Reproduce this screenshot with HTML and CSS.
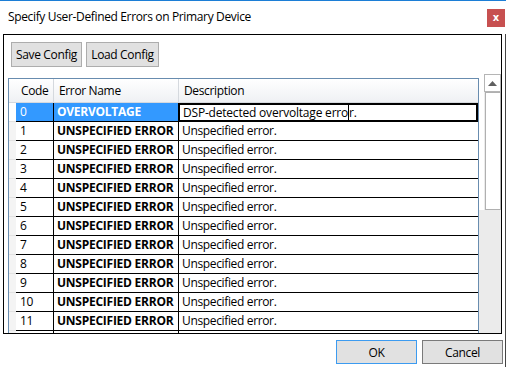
FILE: index.html
```html
<!DOCTYPE html>
<html lang="en">
<head>
    <meta charset="UTF-8">
    <title>Specify User-Defined Errors on Primary Device</title>
    <link rel="stylesheet" href="styles.css">
</head>
<body>
    <div class="window">
        <div class="titlebar">
            <span class="title">Specify User-Defined Errors on Primary Device</span>
            <button class="close-btn">x</button>
        </div>

        <div class="content">
            <div class="panel">
                <div class="toolbar">
                    <button class="btn save">Save Config</button>
                    <button class="btn load">Load Config</button>
                </div>

                <div class="grid-area">
                    <div class="grid">
                        <div class="row header">
                            <div class="rh"></div>
                            <div class="cell code">Code</div>
                            <div class="cell name">Error Name</div>
                            <div class="cell desc">Description</div>
                        </div>

                        <div class="row selected">
                            <div class="rh"></div>
                            <div class="cell code">0</div>
                            <div class="cell name">OVERVOLTAGE</div>
                            <div class="cell desc editing">DSP-detected overvoltage erro<span class="caret"></span>r.</div>
                        </div>
                        <div class="row"><div class="rh"></div><div class="cell code">1</div><div class="cell name">UNSPECIFIED ERROR</div><div class="cell desc">Unspecified error.</div></div>
                        <div class="row"><div class="rh"></div><div class="cell code">2</div><div class="cell name">UNSPECIFIED ERROR</div><div class="cell desc">Unspecified error.</div></div>
                        <div class="row"><div class="rh"></div><div class="cell code">3</div><div class="cell name">UNSPECIFIED ERROR</div><div class="cell desc">Unspecified error.</div></div>
                        <div class="row"><div class="rh"></div><div class="cell code">4</div><div class="cell name">UNSPECIFIED ERROR</div><div class="cell desc">Unspecified error.</div></div>
                        <div class="row"><div class="rh"></div><div class="cell code">5</div><div class="cell name">UNSPECIFIED ERROR</div><div class="cell desc">Unspecified error.</div></div>
                        <div class="row"><div class="rh"></div><div class="cell code">6</div><div class="cell name">UNSPECIFIED ERROR</div><div class="cell desc">Unspecified error.</div></div>
                        <div class="row"><div class="rh"></div><div class="cell code">7</div><div class="cell name">UNSPECIFIED ERROR</div><div class="cell desc">Unspecified error.</div></div>
                        <div class="row"><div class="rh"></div><div class="cell code">8</div><div class="cell name">UNSPECIFIED ERROR</div><div class="cell desc">Unspecified error.</div></div>
                        <div class="row"><div class="rh"></div><div class="cell code">9</div><div class="cell name">UNSPECIFIED ERROR</div><div class="cell desc">Unspecified error.</div></div>
                        <div class="row"><div class="rh"></div><div class="cell code">10</div><div class="cell name">UNSPECIFIED ERROR</div><div class="cell desc">Unspecified error.</div></div>
                        <div class="row"><div class="rh"></div><div class="cell code">11</div><div class="cell name">UNSPECIFIED ERROR</div><div class="cell desc">Unspecified error.</div></div>
                        <!-- next row is scrolled just past the bottom edge -->
                        <div class="row"><div class="rh"></div><div class="cell code"></div><div class="cell name"></div><div class="cell desc"></div></div>
                    </div>

                    <div class="scroll">
                        <div class="scroll-up">
                            <svg width="9" height="5" viewBox="0 0 9 5"><path d="M0 5 L4.5 0 L9 5 Z" fill="#606060"/></svg>
                        </div>
                        <div class="scroll-thumb"></div>
                    </div>
                </div>
            </div>

            <div class="footer">
                <button class="btn dlg default">OK</button>
                <button class="btn dlg">Cancel</button>
            </div>
        </div>
    </div>
</body>
</html>
```

FILE: styles.css
```css
* {
    margin: 0;
    padding: 0;
    box-sizing: border-box;
}

body {
    width: 506px;
    height: 367px;
    overflow: hidden;
    background: #ffffff;
    font-family: 'Open Sans', 'Noto Sans', sans-serif;
    font-size: 12px;
    letter-spacing: -0.35px;
    color: #000000;
}

.window {
    width: 506px;
    height: 367px;
    display: flex;
    flex-direction: column;
}

/* title bar */

.titlebar {
    height: 34px;
    border-top: 1px solid #1c7ed6;
    display: flex;
    align-items: flex-start;
    justify-content: space-between;
    padding: 7px 1px 0 8px;
}

.title {
    line-height: 17px;
}

.close-btn {
    width: 18px;
    height: 18px;
    margin-top: 1px;
    border: none;
    background: #c75050;
    color: #ffffff;
    font-family: 'DejaVu Sans', sans-serif;
    font-size: 10px;
    font-weight: bold;
    line-height: 16px;
    letter-spacing: 0;
}

/* body */

.content {
    flex: 1;
    border-right: 1px solid #444444;
    padding-left: 3px;
}

.panel {
    width: 499px;
    height: 300px;
    border: 1px solid #000000;
    padding: 7px 0 0 4px;
    overflow: hidden;
}

.toolbar {
    display: flex;
    gap: 4px;
    margin-left: 3px;
    margin-bottom: 7px;
}

.btn {
    height: 25px;
    padding: 0;
    background: #e1e1e1;
    border: 1px solid #adadad;
    font-family: inherit;
    font-size: 12px;
    letter-spacing: inherit;
    color: #000000;
}

.btn.save {
    width: 71px;
}

.btn.load {
    width: 73px;
}

.grid-area {
    display: flex;
    align-items: flex-start;
}

.grid {
    width: 471px;
    margin-top: 4px;
    border: 1px solid #688caf;
    border-bottom: none;
}

.row {
    display: flex;
    height: 19px;
    line-height: 18px;
}

.rh {
    width: 7px;
    flex: none;
    background: #f4f4f4;
    border-bottom: 1px solid #e2e2e2;
}

.cell {
    flex: none;
    white-space: nowrap;
    overflow: hidden;
    border-bottom: 1px solid #000000;
    border-right: 1px solid #000000;
}

.cell.code {
    width: 38px;
    padding-left: 4px;
}

.cell.name {
    width: 125px;
    padding-left: 3px;
    font-weight: bold;
    letter-spacing: -0.25px;
}

.cell.desc {
    width: 299px;
    padding-left: 3px;
    border-right: none;
}

.row.header {
    height: 24px;
    line-height: 23px;
    background: linear-gradient(#ffffff, #eef0f3);
}

.row.header .rh {
    background: transparent;
    border-bottom: 1px solid #d5d9de;
}

.row.header .cell {
    font-weight: normal;
    letter-spacing: -0.35px;
    border-bottom: 1px solid #d5d9de;
    border-right: 1px solid #d5d9de;
    padding-left: 5px;
}

.row.header .cell.desc {
    border-right: none;
}

.row.selected .rh {
    background: #ffffff;
}

.row.selected .code,
.row.selected .name {
    background: #3399ff;
    color: #ffffff;
}

.cell.editing {
    border: 2px solid #000000;
    margin-left: -1px;
    width: 300px;
    line-height: 15px;
    padding-left: 3px;
    letter-spacing: -0.2px;
}

.caret {
    display: inline-block;
    width: 1px;
    height: 15px;
    background: #000000;
    vertical-align: top;
}

/* scrollbar */

.scroll {
    width: 22px;
    height: 300px;
    background: #ebebeb;
    position: relative;
    padding-left: 5px;
}

.scroll::before {
    content: "";
    position: absolute;
    left: 0;
    top: 0;
    width: 5px;
    height: 136px;
    background: #ffffff;
}

.scroll-up {
    width: 17px;
    height: 18px;
    border: 1px solid #b5b5b5;
    background: #ffffff;
    display: flex;
    align-items: center;
    justify-content: center;
}

.scroll-thumb {
    width: 16px;
    height: 118px;
    margin-left: 1px;
    border: 1px solid #b0b0b0;
    background: #ffffff;
}

/* footer */

.footer {
    display: flex;
    justify-content: flex-end;
    gap: 5px;
    padding: 6px 2px 0 0;
}

.btn.dlg {
    width: 81px;
    height: 24px;
}

.btn.default {
    border-color: #3c9bf0;
}

.footer .btn:last-child {
    border-color: #7a7a7a;
}
```
